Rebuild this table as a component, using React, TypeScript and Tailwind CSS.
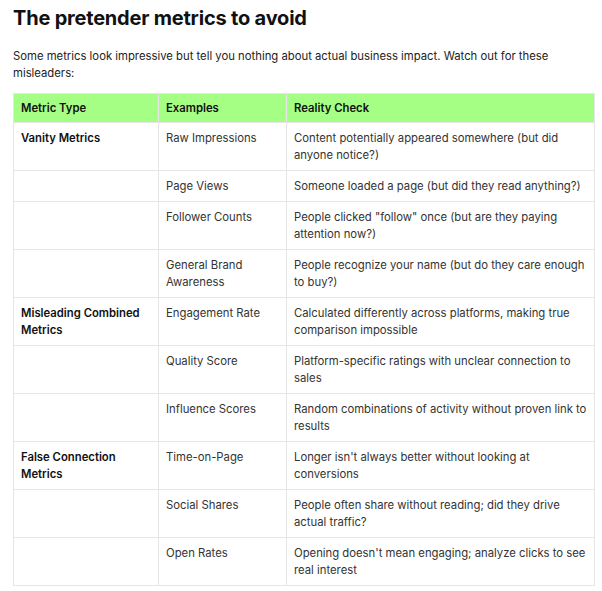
const rows = [
  { type: 'Vanity Metrics', example: 'Raw Impressions', check: 'Content potentially appeared somewhere (but did anyone notice?)' },
  { type: '', example: 'Page Views', check: 'Someone loaded a page (but did they read anything?)' },
  { type: '', example: 'Follower Counts', check: 'People clicked "follow" once (but are they paying attention now?)' },
  { type: '', example: 'General Brand Awareness', check: 'People recognize your name (but do they care enough to buy?)' },
  { type: 'Misleading Combined Metrics', example: 'Engagement Rate', check: 'Calculated differently across platforms, making true comparison impossible' },
  { type: '', example: 'Quality Score', check: 'Platform-specific ratings with unclear connection to sales' },
  { type: '', example: 'Influence Scores', check: 'Random combinations of activity without proven link to results' },
  { type: 'False Connection Metrics', example: 'Time-on-Page', check: "Longer isn't always better without looking at conversions" },
  { type: '', example: 'Social Shares', check: 'People often share without reading; did they drive actual traffic?' },
  { type: '', example: 'Open Rates', check: "Opening doesn't mean engaging; analyze clicks to see real interest" },
];

const App = () => {
  return (
    <div className="bg-white px-[13px] pt-[4px] text-[#1f1f1f] font-['Inter',sans-serif]">
      <h2 className="text-[20px] leading-[28px] font-bold tracking-[-0.2px] text-[#111]">
        The pretender metrics to avoid
      </h2>
      <p className="mt-[16px] text-[11.3px] leading-[17px] text-[#222]">
        Some metrics look impressive but tell you nothing about actual business impact. Watch out for these misleaders:
      </p>
      <table className="mt-[11px] w-[582px] border-collapse text-[11.3px] leading-[17px]">
        <thead>
          <tr className="bg-[#a6ff85]">
            <th className="w-[145px] border border-[#e6e6e6] px-[7px] pt-[6px] pb-[5px] text-left font-semibold text-[#111]">Metric Type</th>
            <th className="w-[128px] border border-[#e6e6e6] px-[7px] pt-[6px] pb-[5px] text-left font-semibold text-[#111]">Examples</th>
            <th className="border border-[#e6e6e6] px-[7px] pt-[6px] pb-[5px] text-left font-semibold text-[#111]">Reality Check</th>
          </tr>
        </thead>
        <tbody>
          {rows.map((row, i) => (
            <tr key={i}>
              <td className="border border-[#e6e6e6] px-[7px] pt-[7px] pb-[6px] align-top font-semibold text-[#111]">{row.type}</td>
              <td className="border border-[#e6e6e6] px-[7px] pt-[7px] pb-[6px] align-top text-[#333]">{row.example}</td>
              <td className="border border-[#e6e6e6] px-[7px] pt-[7px] pb-[6px] align-top text-[#333]">{row.check}</td>
            </tr>
          ))}
        </tbody>
      </table>
    </div>
  );
};

export default App;
